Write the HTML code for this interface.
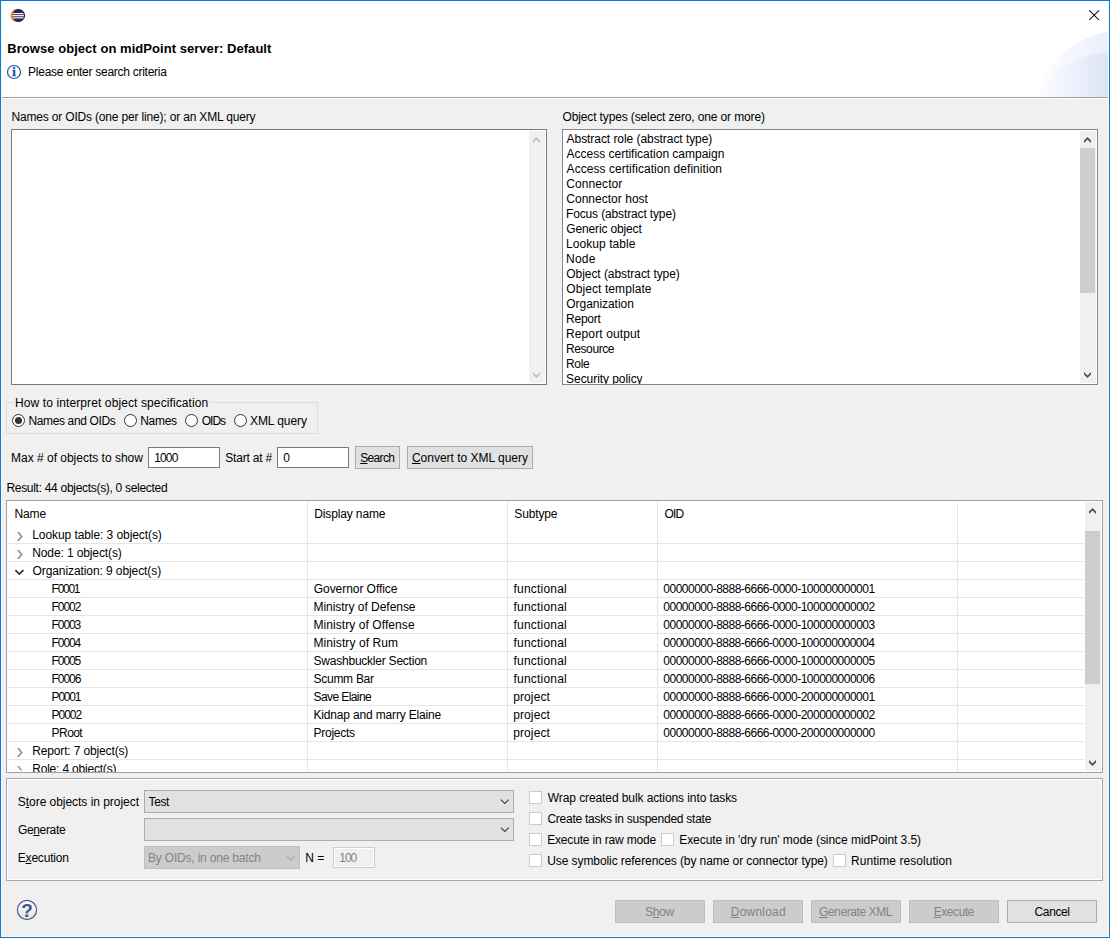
<!DOCTYPE html>
<html lang="en">
<head>
<meta charset="utf-8">
<title>Browse object on midPoint server: Default</title>
<style>
html,body{margin:0;padding:0;}
body{width:1110px;height:938px;overflow:hidden;background:#f0f0f0;font-family:"Liberation Sans",sans-serif;font-size:12px;color:#000;position:relative;}
#win{position:absolute;left:0;top:0;width:1108px;height:936px;border:1px solid #0a78d4;background:#f0f0f0;overflow:hidden;}
#win>*{position:absolute;}
.abs,.t{position:absolute;}
.t{white-space:pre;line-height:16px;height:16px;color:#000;}
.t u{text-decoration:underline;text-underline-offset:1px;text-decoration-thickness:1px;}
.dis{color:#838383;}
.white{background:#fff;}
.box{box-sizing:border-box;}
.edit{box-sizing:border-box;background:#fff;border:1px solid #7a7a7a;}
.btn{box-sizing:border-box;background:#e1e1e1;border:1px solid #adadad;}
.btn.dis{background:#cccccc;border:1px solid #bfbfbf;}
.combo{box-sizing:border-box;background:#e1e1e1;border:1px solid #adadad;}
.combo.dis{background:#cccccc;border:1px solid #bfbfbf;}
.chk{box-sizing:border-box;background:#fff;border:1px solid #cccccc;width:13px;height:13px;}
.radio{box-sizing:border-box;background:#fff;border:1px solid #333;width:13px;height:13px;border-radius:50%;}
.radio.on::after{content:"";position:absolute;left:2px;top:2px;width:7px;height:7px;border-radius:50%;background:#333;}
.grp{box-sizing:border-box;border:1px solid #dcdcdc;}
.hl{background:#e6e6e6;height:1px;}
.vl{background:#e5e5e5;width:1px;}
.sbtrack{background:#f0f0f0;}
.sbthumb{background:#cdcdcd;}
svg{position:absolute;overflow:visible;}
</style>
</head>
<body>
<div id="win">
<div class="abs white" style="left:0px;top:0px;width:1108px;height:96px;"></div>
<svg style="left:958px;top:0px" width="150" height="96" viewBox="0 0 150 96">
<defs><linearGradient id="g1" x1="0" y1="0" x2="1" y2="0"><stop offset="0" stop-color="#ffffff"/><stop offset="1" stop-color="#ebeffb"/></linearGradient>
<linearGradient id="g2" x1="0" y1="0" x2="1" y2="0"><stop offset="0" stop-color="#ffffff"/><stop offset="1" stop-color="#dde4f7"/></linearGradient></defs>
<path d="M72 96 L78 92 C 87 64, 108 40, 150 30 L150 96 Z" fill="url(#g1)"/>
<path d="M73 96 L96 73 C 108 61, 130 52.5, 150 51.3 L150 96 Z" fill="url(#g2)"/>
</svg>
<div class="abs " style="left:0px;top:96px;width:1108px;height:1px;background:#a0a0a0"></div>
<div class="abs " style="left:0px;top:97px;width:1108px;height:1px;background:#ffffff"></div>
<svg style="left:9px;top:7px" width="17" height="17" viewBox="0 0 17 17"><circle cx="7.3" cy="7.5" r="6.8" fill="#f7941e"/>
<circle cx="8.6" cy="7.5" r="6.5" fill="#2c2255"/>
<rect x="2.5" y="5.05" width="11" height="1.15" fill="#fff"/>
<rect x="2.1" y="7.1" width="11.9" height="1.2" fill="#fff"/>
<rect x="2.7" y="9.25" width="10.8" height="1.15" fill="#fff"/></svg>
<svg style="left:1088px;top:9px" width="12" height="12" viewBox="0 0 12 12"><path d="M0.3 0.3 L10 10 M10 0.3 L0.3 10" stroke="#000" stroke-width="1.05" fill="none"/></svg>
<svg style="left:5px;top:63px" width="17" height="17" viewBox="0 0 17 17"><circle cx="8" cy="8" r="6.5" fill="#fff" stroke="#1f5ca0" stroke-width="1.2"/><text x="8.1" y="11.9" text-anchor="middle" font-family="Liberation Serif, serif" font-weight="bold" font-size="12.5" fill="#0f4e96" stroke="#0f4e96" stroke-width="0.3">i</text></svg>
<div class="abs edit" style="left:10px;top:128px;width:536px;height:256px;"></div>
<div class="abs sbtrack" style="left:528px;top:130px;width:16px;height:252px;"></div>
<svg style="left:531px;top:136px" width="9" height="8" viewBox="0 0 9 8"><g transform="translate(0.50 0.00)"><path d="M0.5 3.6 L4 0 L7.5 3.6 L7.5 6.1 L4 2.6 L0.5 6.1 Z" fill="#bfbfbf"/></g></svg>
<svg style="left:531px;top:371px" width="9" height="8" viewBox="0 0 9 8"><g transform="translate(0.50 0.00)"><path d="M0.5 2.5 L4 6.1 L7.5 2.5 L7.5 0 L4 3.5 L0.5 0 Z" fill="#bfbfbf"/></g></svg>
<div class="abs edit" style="left:561px;top:128px;width:536px;height:256px;border-color:#828790;overflow:hidden"></div>
<div class="abs sbtrack" style="left:1079px;top:130px;width:16px;height:252px;"></div>
<div class="abs sbthumb" style="left:1079px;top:147px;width:15px;height:145px;"></div>
<svg style="left:1082px;top:136px" width="9" height="8" viewBox="0 0 9 8"><g transform="translate(0.50 0.00)"><path d="M0.5 3.6 L4 0 L7.5 3.6 L7.5 6.1 L4 2.6 L0.5 6.1 Z" fill="#505050"/></g></svg>
<svg style="left:1082px;top:371px" width="9" height="8" viewBox="0 0 9 8"><g transform="translate(0.50 0.00)"><path d="M0.5 2.5 L4 6.1 L7.5 2.5 L7.5 0 L4 3.5 L0.5 0 Z" fill="#505050"/></g></svg>
<div class="abs grp" style="left:5px;top:401px;width:312px;height:32px;"></div>
<div class="abs " style="left:12px;top:395px;width:197px;height:14px;background:#f0f0f0"></div>
<div class="abs radio on" style="left:11px;top:413px;width:13px;height:13px;"></div>
<div class="abs radio" style="left:123px;top:413px;width:13px;height:13px;"></div>
<div class="abs radio" style="left:184px;top:413px;width:13px;height:13px;"></div>
<div class="abs radio" style="left:233px;top:413px;width:13px;height:13px;"></div>
<div class="abs edit" style="left:147px;top:446px;width:72px;height:21px;"></div>
<div class="abs edit" style="left:276px;top:446px;width:72px;height:21px;"></div>
<div class="abs btn" style="left:354px;top:445px;width:45px;height:23px;"></div>
<div class="abs btn" style="left:406px;top:445px;width:126px;height:23px;"></div>
<div class="abs edit" style="left:5px;top:499px;width:1097px;height:273px;border-color:#9da0a8"></div>
<div class="abs vl" style="left:306px;top:501px;width:1px;height:269px;"></div>
<div class="abs vl" style="left:506px;top:501px;width:1px;height:269px;"></div>
<div class="abs vl" style="left:656px;top:501px;width:1px;height:269px;"></div>
<div class="abs vl" style="left:956px;top:501px;width:1px;height:269px;"></div>
<div class="abs hl" style="left:7px;top:542px;width:1076px;height:1px;"></div>
<div class="abs hl" style="left:7px;top:560px;width:1076px;height:1px;"></div>
<div class="abs hl" style="left:7px;top:578px;width:1076px;height:1px;"></div>
<div class="abs hl" style="left:7px;top:596px;width:1076px;height:1px;"></div>
<div class="abs hl" style="left:7px;top:614px;width:1076px;height:1px;"></div>
<div class="abs hl" style="left:7px;top:632px;width:1076px;height:1px;"></div>
<div class="abs hl" style="left:7px;top:650px;width:1076px;height:1px;"></div>
<div class="abs hl" style="left:7px;top:668px;width:1076px;height:1px;"></div>
<div class="abs hl" style="left:7px;top:686px;width:1076px;height:1px;"></div>
<div class="abs hl" style="left:7px;top:704px;width:1076px;height:1px;"></div>
<div class="abs hl" style="left:7px;top:722px;width:1076px;height:1px;"></div>
<div class="abs hl" style="left:7px;top:740px;width:1076px;height:1px;"></div>
<div class="abs hl" style="left:7px;top:758px;width:1076px;height:1px;"></div>
<div class="abs sbtrack" style="left:1084px;top:501px;width:16px;height:269px;"></div>
<div class="abs sbthumb" style="left:1084px;top:530px;width:15px;height:153px;"></div>
<svg style="left:1087px;top:506px" width="9" height="8" viewBox="0 0 9 8"><g transform="translate(0.50 0.90)"><path d="M0.5 3.6 L4 0 L7.5 3.6 L7.5 6.1 L4 2.6 L0.5 6.1 Z" fill="#505050"/></g></svg>
<svg style="left:1087px;top:759px" width="9" height="8" viewBox="0 0 9 8"><g transform="translate(0.50 0.00)"><path d="M0.5 2.5 L4 6.1 L7.5 2.5 L7.5 0 L4 3.5 L0.5 0 Z" fill="#505050"/></g></svg>
<svg style="left:15px;top:531px" width="7" height="10" viewBox="0 0 7 10"><g transform="translate(0.90 0.00)"><path d="M0 0 L2.3 0 L5.8 4.45 L2.3 8.9 L0 8.9 L3.5 4.45 Z" fill="#989898"/></g></svg>
<svg style="left:15px;top:549px" width="7" height="10" viewBox="0 0 7 10"><g transform="translate(0.90 0.00)"><path d="M0 0 L2.3 0 L5.8 4.45 L2.3 8.9 L0 8.9 L3.5 4.45 Z" fill="#989898"/></g></svg>
<svg style="left:13px;top:568px" width="11" height="7" viewBox="0 0 11 7"><g transform="translate(0.70 0.50)"><path d="M0 1.3 L1.3 0 L4.7 3.2 L8.1 0 L9.4 1.3 L4.7 5.8 Z" fill="#3a3a3a"/></g></svg>
<svg style="left:15px;top:747px" width="7" height="10" viewBox="0 0 7 10"><g transform="translate(0.90 0.00)"><path d="M0 0 L2.3 0 L5.8 4.45 L2.3 8.9 L0 8.9 L3.5 4.45 Z" fill="#989898"/></g></svg>
<svg style="left:15px;top:765px" width="7" height="10" viewBox="0 0 7 10"><g transform="translate(0.90 0.00)"><path d="M0 0 L2.1 0 L5.8 4.45 L3.7 4.45 Z" fill="#9c9c9c"/></g></svg>
<div class="abs grp" style="left:5px;top:777px;width:1097px;height:103px;border-color:#a5a7ad;box-shadow:inset 0 0 0 1px #fff;"></div>
<div class="abs combo" style="left:143px;top:789px;width:370px;height:23px;"></div>
<svg style="left:499px;top:798px" width="10" height="7" viewBox="0 0 10 7"><g transform="translate(0.50 0.00)"><path d="M0.4 0.6 L4.3 4.5 L8.2 0.6" stroke="#404040" stroke-width="1.1" fill="none"/></g></svg>
<div class="abs combo" style="left:143px;top:817px;width:370px;height:23px;"></div>
<svg style="left:499px;top:826px" width="10" height="7" viewBox="0 0 10 7"><g transform="translate(0.50 0.00)"><path d="M0.4 0.6 L4.3 4.5 L8.2 0.6" stroke="#404040" stroke-width="1.1" fill="none"/></g></svg>
<div class="abs combo dis" style="left:143px;top:845px;width:156px;height:23px;"></div>
<svg style="left:285px;top:854px" width="10" height="7" viewBox="0 0 10 7"><g transform="translate(0.50 0.50)"><path d="M0.4 0.6 L4.3 4.5 L8.2 0.6" stroke="#a6a6a6" stroke-width="1.1" fill="none"/></g></svg>
<div class="abs box" style="left:332px;top:846px;width:42px;height:21px;border:1px solid #cccccc;background:#f0f0f0;box-shadow:inset 0 0 0 1px #fff;"></div>
<div class="abs chk" style="left:528px;top:790px;width:13px;height:13px;"></div>
<div class="abs chk" style="left:528px;top:811px;width:13px;height:13px;"></div>
<div class="abs chk" style="left:528px;top:832px;width:13px;height:13px;"></div>
<div class="abs chk" style="left:660px;top:832px;width:13px;height:13px;"></div>
<div class="abs chk" style="left:528px;top:853px;width:13px;height:13px;"></div>
<div class="abs chk" style="left:832px;top:853px;width:13px;height:13px;"></div>
<div class="abs btn dis" style="left:614px;top:899px;width:90px;height:23px;"></div>
<div class="abs btn dis" style="left:712px;top:899px;width:90px;height:23px;"></div>
<div class="abs btn dis" style="left:810px;top:899px;width:90px;height:23px;"></div>
<div class="abs btn dis" style="left:908px;top:899px;width:90px;height:23px;"></div>
<div class="abs btn" style="left:1006px;top:899px;width:90px;height:23px;"></div>
<svg style="left:15px;top:898px" width="22" height="22" viewBox="0 0 22 22"><defs><linearGradient id="hg" x1="0" y1="0" x2="0" y2="1"><stop offset="0" stop-color="#ffffff"/><stop offset="1" stop-color="#e2e2e2"/></linearGradient></defs><circle cx="11" cy="11" r="9.6" fill="url(#hg)" stroke="#4a5f8a" stroke-width="1.2"/><text x="11" y="17.9" text-anchor="middle" font-family="Liberation Sans, sans-serif" font-weight="bold" font-size="19" fill="#3f5785">?</text></svg>
<div class="abs " style="left:0px;top:0px;width:1px;height:936px;background:#fcf7f1;z-index:5"></div>
<div class="abs " style="left:1107px;top:0px;width:1px;height:936px;background:#fcf7f1;z-index:5"></div>
<div class="abs " style="left:0px;top:935px;width:1108px;height:1px;background:#fcf7f1;z-index:5"></div>
<span class="t" style="left:6.27px;top:40px;font-size:13px;font-weight:bold;letter-spacing:0.047px;">Browse object on midPoint server: Default</span>
<span class="t" style="left:27.11px;top:63px;letter-spacing:-0.270px;">Please enter search criteria</span>
<span class="t" style="left:10.41px;top:108px;letter-spacing:-0.171px;">Names or OIDs (one per line); or an XML query</span>
<span class="t" style="left:561.49px;top:108px;letter-spacing:-0.130px;">Object types (select zero, one or more)</span>
<span class="t" style="left:565.58px;top:130px;letter-spacing:-0.058px;">Abstract role (abstract type)</span>
<span class="t" style="left:565.58px;top:145px;letter-spacing:-0.012px;">Access certification campaign</span>
<span class="t" style="left:565.58px;top:160px;letter-spacing:0.046px;">Access certification definition</span>
<span class="t" style="left:565.24px;top:175px;letter-spacing:0.091px;">Connector</span>
<span class="t" style="left:565.24px;top:190px;letter-spacing:0.026px;">Connector host</span>
<span class="t" style="left:565.01px;top:205px;letter-spacing:-0.139px;">Focus (abstract type)</span>
<span class="t" style="left:565.24px;top:220px;letter-spacing:-0.142px;">Generic object</span>
<span class="t" style="left:565.01px;top:235px;letter-spacing:0.070px;">Lookup table</span>
<span class="t" style="left:565.01px;top:250px;letter-spacing:0.258px;">Node</span>
<span class="t" style="left:565.29px;top:265px;letter-spacing:-0.054px;">Object (abstract type)</span>
<span class="t" style="left:565.29px;top:280px;letter-spacing:0.084px;">Object template</span>
<span class="t" style="left:565.29px;top:295px;letter-spacing:-0.047px;">Organization</span>
<span class="t" style="left:565.01px;top:310px;letter-spacing:-0.215px;">Report</span>
<span class="t" style="left:565.01px;top:325px;letter-spacing:0.112px;">Report output</span>
<span class="t" style="left:565.01px;top:340px;letter-spacing:-0.405px;">Resource</span>
<span class="t" style="left:565.01px;top:355px;letter-spacing:-0.312px;">Role</span>
<span class="t" style="left:565.10px;top:370px;letter-spacing:-0.061px;clip-path:inset(0 0 3px 0);">Security policy</span>
<span class="t" style="left:14.01px;top:394px;letter-spacing:0.107px;">How to interpret object specification</span>
<span class="t" style="left:27.41px;top:412px;letter-spacing:-0.362px;">Names and OIDs</span>
<span class="t" style="left:139.21px;top:412px;letter-spacing:-0.285px;">Names</span>
<span class="t" style="left:200.69px;top:412px;letter-spacing:-0.989px;">OIDs</span>
<span class="t" style="left:248.98px;top:412px;letter-spacing:-0.082px;">XML query</span>
<span class="t" style="left:10.01px;top:449px;letter-spacing:-0.008px;">Max # of objects to show</span>
<span class="t" style="left:153.21px;top:449px;letter-spacing:-0.860px;">1000</span>
<span class="t" style="left:224.30px;top:449px;letter-spacing:-0.213px;">Start at #</span>
<span class="t" style="left:282.37px;top:449px;">0</span>
<span class="t" style="left:359.20px;top:449px;letter-spacing:-0.651px;"><u>S</u>earch</span>
<span class="t" style="left:410.94px;top:449px;letter-spacing:-0.011px;"><u>C</u>onvert to XML query</span>
<span class="t" style="left:5.41px;top:479px;letter-spacing:-0.297px;">Result: 44 objects(s), 0 selected</span>
<span class="t" style="left:13.41px;top:505px;letter-spacing:-0.064px;">Name</span>
<span class="t" style="left:313.21px;top:505px;letter-spacing:-0.131px;">Display name</span>
<span class="t" style="left:513.30px;top:505px;letter-spacing:-0.133px;">Subtype</span>
<span class="t" style="left:663.49px;top:505px;letter-spacing:-0.860px;">OID</span>
<span class="t" style="left:31.21px;top:526px;letter-spacing:-0.073px;">Lookup table: 3 object(s)</span>
<span class="t" style="left:31.21px;top:544px;letter-spacing:-0.110px;">Node: 1 object(s)</span>
<span class="t" style="left:31.49px;top:562px;letter-spacing:-0.086px;">Organization: 9 object(s)</span>
<span class="t" style="left:50.61px;top:580px;letter-spacing:-1.298px;">F0001</span>
<span class="t" style="left:312.74px;top:580px;letter-spacing:-0.054px;">Governor Office</span>
<span class="t" style="left:512.49px;top:580px;letter-spacing:0.204px;">functional</span>
<span class="t" style="left:662.37px;top:580px;letter-spacing:-0.508px;">00000000-8888-6666-0000-100000000001</span>
<span class="t" style="left:50.61px;top:598px;letter-spacing:-1.077px;">F0002</span>
<span class="t" style="left:312.51px;top:598px;letter-spacing:-0.037px;">Ministry of Defense</span>
<span class="t" style="left:512.49px;top:598px;letter-spacing:0.204px;">functional</span>
<span class="t" style="left:662.37px;top:598px;letter-spacing:-0.506px;">00000000-8888-6666-0000-100000000002</span>
<span class="t" style="left:50.61px;top:616px;letter-spacing:-1.101px;">F0003</span>
<span class="t" style="left:312.51px;top:616px;letter-spacing:0.072px;">Ministry of Offense</span>
<span class="t" style="left:512.49px;top:616px;letter-spacing:0.204px;">functional</span>
<span class="t" style="left:662.37px;top:616px;letter-spacing:-0.507px;">00000000-8888-6666-0000-100000000003</span>
<span class="t" style="left:50.61px;top:634px;letter-spacing:-1.093px;">F0004</span>
<span class="t" style="left:312.51px;top:634px;letter-spacing:0.081px;">Ministry of Rum</span>
<span class="t" style="left:512.49px;top:634px;letter-spacing:0.204px;">functional</span>
<span class="t" style="left:662.37px;top:634px;letter-spacing:-0.516px;">00000000-8888-6666-0000-100000000004</span>
<span class="t" style="left:50.61px;top:652px;letter-spacing:-1.101px;">F0005</span>
<span class="t" style="left:312.60px;top:652px;letter-spacing:-0.232px;">Swashbuckler Section</span>
<span class="t" style="left:512.49px;top:652px;letter-spacing:0.204px;">functional</span>
<span class="t" style="left:662.37px;top:652px;letter-spacing:-0.510px;">00000000-8888-6666-0000-100000000005</span>
<span class="t" style="left:50.61px;top:670px;letter-spacing:-1.075px;">F0006</span>
<span class="t" style="left:312.60px;top:670px;letter-spacing:-0.287px;">Scumm Bar</span>
<span class="t" style="left:512.49px;top:670px;letter-spacing:0.204px;">functional</span>
<span class="t" style="left:662.37px;top:670px;letter-spacing:-0.508px;">00000000-8888-6666-0000-100000000006</span>
<span class="t" style="left:50.61px;top:688px;letter-spacing:-1.230px;">P0001</span>
<span class="t" style="left:312.60px;top:688px;letter-spacing:-0.600px;">Save Elaine</span>
<span class="t" style="left:512.13px;top:688px;letter-spacing:0.123px;">project</span>
<span class="t" style="left:662.37px;top:688px;letter-spacing:-0.508px;">00000000-8888-6666-0000-200000000001</span>
<span class="t" style="left:50.61px;top:706px;letter-spacing:-1.044px;">P0002</span>
<span class="t" style="left:312.51px;top:706px;letter-spacing:-0.167px;">Kidnap and marry Elaine</span>
<span class="t" style="left:512.13px;top:706px;letter-spacing:0.123px;">project</span>
<span class="t" style="left:662.37px;top:706px;letter-spacing:-0.506px;">00000000-8888-6666-0000-200000000002</span>
<span class="t" style="left:50.61px;top:724px;letter-spacing:-0.570px;">PRoot</span>
<span class="t" style="left:312.51px;top:724px;letter-spacing:-0.261px;">Projects</span>
<span class="t" style="left:512.13px;top:724px;letter-spacing:0.123px;">project</span>
<span class="t" style="left:662.37px;top:724px;letter-spacing:-0.510px;">00000000-8888-6666-0000-200000000000</span>
<span class="t" style="left:31.21px;top:742px;letter-spacing:-0.142px;">Report: 7 object(s)</span>
<span class="t" style="left:31.21px;top:760px;letter-spacing:-0.195px;clip-path:inset(0 0 5px 0);">Role: 4 object(s)</span>
<span class="t" style="left:16.80px;top:793px;letter-spacing:-0.039px;">S<u>t</u>ore objects in project</span>
<span class="t" style="left:147.57px;top:793px;letter-spacing:-0.406px;">Test</span>
<span class="t" style="left:16.94px;top:821px;letter-spacing:-0.341px;">Ge<u>n</u>erate</span>
<span class="t" style="left:16.71px;top:849px;letter-spacing:-0.175px;">E<u>x</u>ecution</span>
<span class="t dis" style="left:147.01px;top:849px;letter-spacing:-0.190px;">By OIDs, in one batch</span>
<span class="t" style="left:304.21px;top:849px;letter-spacing:-0.027px;">N =</span>
<span class="t dis" style="left:338.21px;top:849px;letter-spacing:-1.000px;">100</span>
<span class="t" style="left:546.82px;top:789px;letter-spacing:-0.093px;">Wrap created bulk actions into tasks</span>
<span class="t" style="left:546.44px;top:810px;letter-spacing:-0.252px;">Create tasks in suspended state</span>
<span class="t" style="left:546.21px;top:831px;letter-spacing:-0.169px;">Execute in raw mode</span>
<span class="t" style="left:678.21px;top:831px;letter-spacing:-0.047px;">Execute in &#x27;dry run&#x27; mode (since midPoint 3.5)</span>
<span class="t" style="left:546.25px;top:852px;letter-spacing:-0.084px;">Use symbolic references (by name or connector type)</span>
<span class="t" style="left:850.01px;top:852px;letter-spacing:0.049px;">Runtime resolution</span>
<span class="t dis" style="left:644.00px;top:903px;letter-spacing:-0.302px;">S<u>h</u>ow</span>
<span class="t dis" style="left:729.81px;top:903px;letter-spacing:0.203px;"><u>D</u>ownload</span>
<span class="t dis" style="left:817.94px;top:903px;letter-spacing:-0.414px;"><u>G</u>enerate XML</span>
<span class="t dis" style="left:932.71px;top:903px;letter-spacing:-0.436px;"><u>E</u>xecute</span>
<span class="t" style="left:1033.54px;top:903px;letter-spacing:-0.371px;">Cancel</span>
</div>
</body>
</html>
